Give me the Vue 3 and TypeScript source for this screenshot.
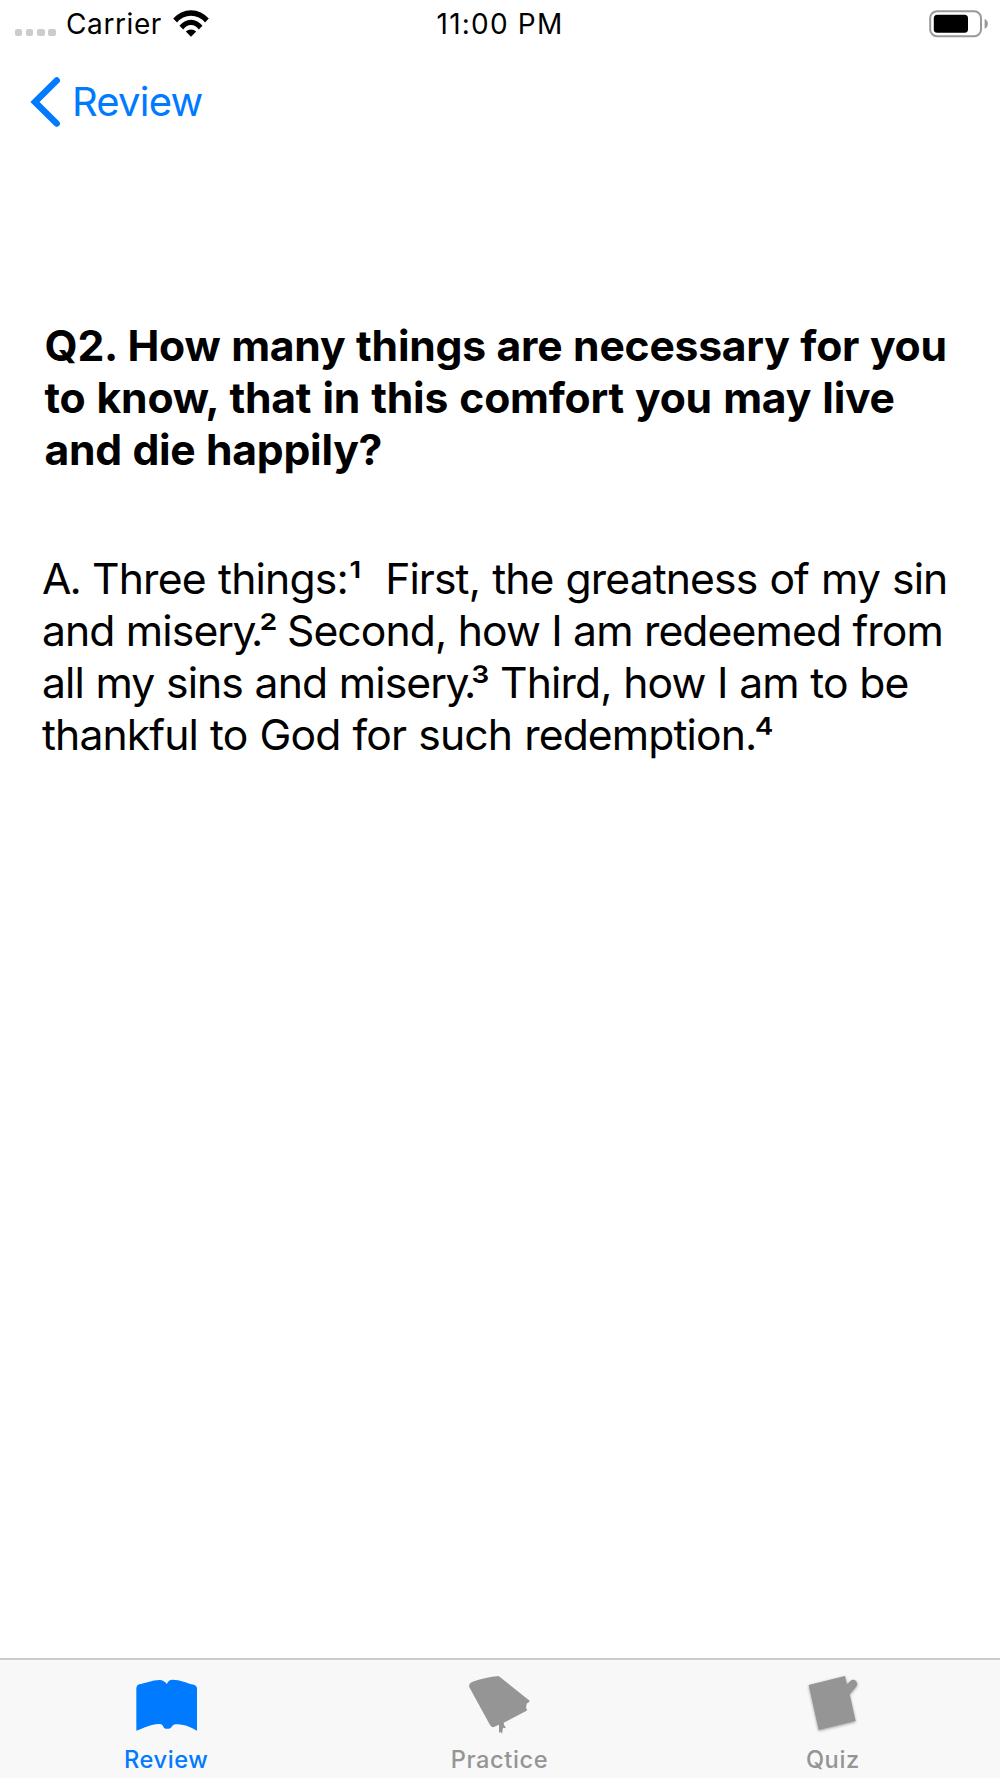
<script setup lang="ts">
interface Line { text: string; gap: number }
interface Piece { text: string; note?: boolean; tracking?: number }
interface AnswerLine { pieces: Piece[]; gap: number }
interface Tab { id: string; label: string; active: boolean; viewBox: string; path: string }

const question: Line[] = [
  { text: 'Q2. How many things are necessary for you', gap: 0.9 },
  { text: 'to know, that in this comfort you may live', gap: 1.4 },
  { text: 'and die happily?', gap: 0.6 },
]

const answer: AnswerLine[] = [
  {
    pieces: [
      { text: 'A.', tracking: -2 },
      { text: ' Three things', tracking: -0.8 },
      { text: ':', tracking: 0 },
      { text: '¹', note: true },
      { text: '\u00a0 First, the greatness of my sin' },
    ],
    gap: 1,
  },
  {
    pieces: [
      { text: 'and miser' },
      { text: 'y', tracking: -5.4 },
      { text: '.', tracking: -4.5 },
      { text: '²', note: true, tracking: -2.1 },
      { text: ' Second, how I am redeemed from' },
    ],
    gap: 0.2,
  },
  {
    pieces: [
      { text: 'all my sins and miser' },
      { text: 'y', tracking: -5.4 },
      { text: '.', tracking: -5.6 },
      { text: '³', note: true, tracking: -1.2 },
      { text: ' Third, how I am to be' },
    ],
    gap: 0.5,
  },
  {
    pieces: [
      { text: 'thankful to God for such redemption' },
      { text: '.', tracking: -3 },
      { text: '⁴', note: true },
    ],
    gap: 1.1,
  },
]

const tabs: Tab[] = [
  {
    id: 'review',
    label: 'Review',
    active: true,
    viewBox: '95 60 210 240',
    path: 'M108 272V144Q109 135 116 133C132 131 155 120 178 120Q192 121 199 132Q205 119 216 119C240 119 260 130 281 134Q289 136 290 144V272C274 264 252 251 226 253C214 254 216 264 206 266H197C187 265 191 254 180 252C156 250 130 264 108 272Z',
  },
  {
    id: 'practice',
    label: 'Practice',
    active: false,
    viewBox: '105 60 210 240',
    path: 'M118 142C115 132 122 127 132 124C153 116 180 110 206 108L299 182L297 187L291 190Q287 200 289 206L292 210L287 214L221 248L222 254L228 265L219 263L216 281L212 276L207 278V254L190 262Q184 262 180 255Z',
  },
  {
    id: 'quiz',
    label: 'Quiz',
    active: false,
    viewBox: '85 60 210 240',
    path: 'M117 135L226 108L232 133L243 122C253 114 266 125 262 136L257 143L240 163L258 243L147 270Z',
  },
]

const tracking = (piece: Piece) =>
  piece.tracking === undefined ? undefined : { letterSpacing: piece.tracking + 'px' }
</script>

<template>
  <div class="screen">
    <header class="status">
      <div class="left">
        <div class="dots"><i v-for="n in 4" :key="n" /></div>
        <span class="carrier">Carrier</span>
        <svg class="wifi" width="38" height="29" viewBox="0 0 38 29">
          <path d="M1.200 9.600A23 23 0 0 1 36.800 9.600L33 13.400A18 18 0 0 0 5 13.400Z" />
          <path d="M7.500 16.800A14 14 0 0 1 30.500 16.800L26.750 20.400A9 9 0 0 0 11.250 20.400Z" />
          <path d="M13.800 22.500A7.500 7.500 0 0 1 24.200 22.500L19 27.700Z" />
        </svg>
      </div>
      <span class="time">11:00 PM</span>
      <svg class="battery" width="60" height="28" viewBox="0 0 60 28">
        <rect x="1.200" y="1.200" width="50.800" height="25" rx="6.800" fill="#fff" stroke="#999" stroke-width="2" />
        <rect x="4.800" y="4.800" width="34.200" height="18" rx="3.500" fill="#000" />
        <path d="M55.600 9C60 10.500 60 17 55.600 18.800Z" fill="#999" />
      </svg>
    </header>

    <nav class="navbar">
      <svg width="31" height="52" viewBox="0 0 31 52"><path d="M26.700 4.500L5 26L26.700 47.500" /></svg>
      <span>Review</span>
    </nav>

    <main>
      <h1>
        <span v-for="line in question" :key="line.text" class="line" :style="{ wordSpacing: line.gap + 'px' }">{{ line.text }}</span>
      </h1>
      <p>
        <span v-for="(line, i) in answer" :key="i" class="line" :style="{ wordSpacing: line.gap + 'px' }"><span v-for="piece in line.pieces" :key="piece.text" :class="{ note: piece.note }" :style="tracking(piece)">{{ piece.text }}</span></span>
      </p>
    </main>

    <footer class="tabs">
      <div v-for="tab in tabs" :key="tab.id" class="tab" :class="[tab.id, { active: tab.active }]">
        <svg width="70" height="80" :viewBox="tab.viewBox"><path :d="tab.path" /></svg>
        <span>{{ tab.label }}</span>
      </div>
    </footer>
  </div>
</template>

<style>
body { margin: 0; background: #fff; }
</style>

<style scoped>
.screen {
  width: 1000px;
  height: 1778px;
  display: flex;
  flex-direction: column;
  overflow: hidden;
  background: #fff;
  color: #000;
  font-family: Inter, "Liberation Sans", sans-serif;
}
.status {
  display: grid;
  grid-template-columns: 1fr auto 1fr;
  align-items: center;
  height: 47px;
  font-size: 28px;
}
.left { display: flex; align-items: center; }
.dots { display: flex; gap: 3.500px; padding: 18px 0 0 14.500px; width: 41.500px; }
.dots i { width: 7.700px; height: 7.700px; border-radius: 2px; background: #ccc; flex: none; }
.carrier { margin-left: 10px; letter-spacing: 0.6px; }
.wifi { margin-left: 10px; }
.time { letter-spacing: 1.200px; }
.battery { justify-self: end; margin-right: 11px; }
.navbar {
  display: flex;
  align-items: center;
  height: 110px;
  padding-left: 30px;
  color: #007aff;
  font-size: 40px;
  letter-spacing: -0.8px;
}
.navbar path { fill: none; stroke: #007aff; stroke-width: 6.500; stroke-linecap: round; }
.navbar span { margin-left: 11px; padding-bottom: 2px; }
main { flex: 1; padding: 162.600px 0 0 42px; }
h1, p { margin: 0; font-size: 42.667px; line-height: 52px; }
h1 { padding-left: 2.500px; font-weight: 700; letter-spacing: -0.25px; }
p { margin-top: 77.200px; letter-spacing: -0.9px; }
.line { display: block; height: 52px; white-space: pre; }
.note { line-height: 0; vertical-align: -3px; }
.tabs {
  display: flex;
  box-sizing: border-box;
  height: 120px;
  background: #f8f8f8;
  border-top: 2px solid #ccc;
}
.tab {
  flex: 1;
  display: flex;
  flex-direction: column;
  align-items: center;
  color: #959595;
  fill: #959595;
  font-size: 23.600px;
  font-weight: 500;
  line-height: 30px;
  letter-spacing: 0.6px;
}
.tab span { margin-top: 4.600px; padding-right: 1px; }
.tab.active { color: #007aff; fill: #007aff; }
.quiz svg { filter: drop-shadow(0 1px 1.500px rgba(0, 0, 0, 0.35)); }
</style>
